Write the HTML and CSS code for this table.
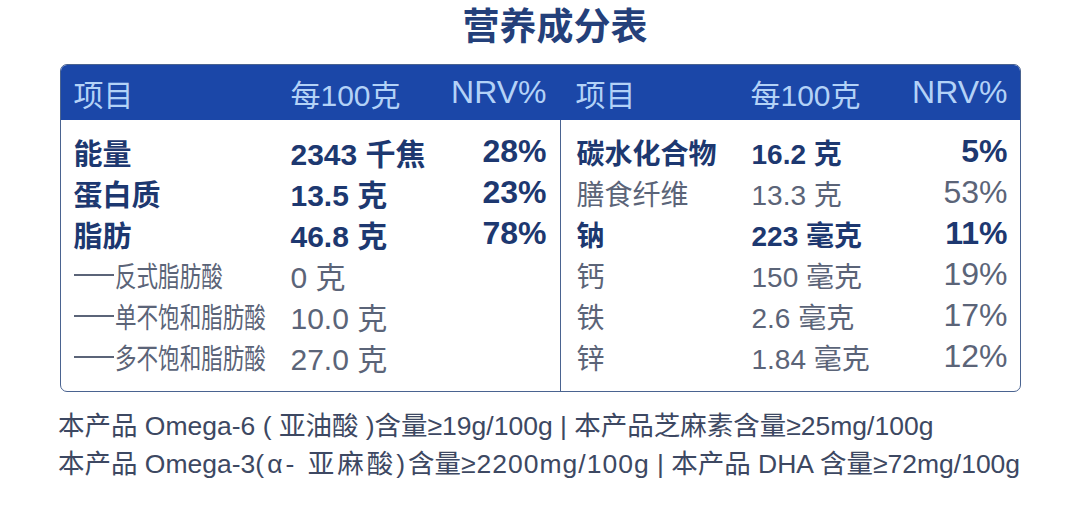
FILE: index.html
```html
<!DOCTYPE html>
<html lang="zh-CN">
<head>
  <meta charset="UTF-8" />
  <title>营养成分表</title>
  <link rel="stylesheet" href="styles.css">
</head>
<body>
  <h1 class="title">营养成分表</h1>

  <div class="nutri-box">
    <div class="head">
      <div class="half left">
        <span>项目</span><span>每100克</span><span class="nrv">NRV%</span>
      </div>
      <div class="half right">
        <span>项目</span><span>每100克</span><span class="nrv">NRV%</span>
      </div>
    </div>

    <div class="body">
      <div class="half left">
        <div class="row strong"><span>能量</span><span class="val">2343 千焦</span><span class="nrv">28%</span></div>
        <div class="row strong"><span>蛋白质</span><span class="val">13.5 克</span><span class="nrv">23%</span></div>
        <div class="row strong"><span>脂肪</span><span class="val">46.8 克</span><span class="nrv">78%</span></div>
        <div class="row sub"><span class="name"><i class="dash"></i><em>反式脂肪酸</em></span><span class="val">0 克</span><span class="nrv"></span></div>
        <div class="row sub"><span class="name"><i class="dash"></i><em>单不饱和脂肪酸</em></span><span class="val">10.0 克</span><span class="nrv"></span></div>
        <div class="row sub"><span class="name"><i class="dash"></i><em>多不饱和脂肪酸</em></span><span class="val">27.0 克</span><span class="nrv"></span></div>
      </div>
      <div class="half right">
        <div class="row strong"><span>碳水化合物</span><span class="val">16.2 克</span><span class="nrv">5%</span></div>
        <div class="row"><span>膳食纤维</span><span class="val">13.3 克</span><span class="nrv">53%</span></div>
        <div class="row strong"><span>钠</span><span class="val">223 毫克</span><span class="nrv">11%</span></div>
        <div class="row"><span>钙</span><span class="val">150 毫克</span><span class="nrv">19%</span></div>
        <div class="row"><span>铁</span><span class="val">2.6 毫克</span><span class="nrv">17%</span></div>
        <div class="row"><span>锌</span><span class="val">1.84 毫克</span><span class="nrv">12%</span></div>
      </div>
    </div>
  </div>

  <div class="notes">
    <p>本产品 Omega-6 ( 亚油酸 )含量≥19g/100g | 本产品芝麻素含量≥25mg/100g</p>
    <p>本产品 Omega-3<span class="wide">(α- 亚麻酸)</span>含量<span class="loose">≥2200mg/100g</span> | 本产品 DHA 含量≥72mg/100g</p>
  </div>
</body>
</html>
```

FILE: styles.css
```css
body {
  margin: 0;
  font-family: "Liberation Sans", "Noto Sans CJK SC", sans-serif;
  background: #ffffff;
  color: #1d3870;
}
.title {
  margin: 6px 0 0;
  padding-left: 30px;
  text-align: center;
  font-size: 37px;
  line-height: 44px;
  font-weight: 700;
  color: #24407a;
}
.nutri-box {
  width: 959px;
  margin: 14px auto 0;
  border: 1.5px solid #4a6390;
  border-radius: 7px;
  overflow: hidden;
  background: #fff;
}
.head {
  display: flex;
  height: 55px;
  background: #1b47a8;
  color: #b3d2f7;
  font-size: 30px;
}
.head .nrv {
  font-size: 32px;
}
.half {
  display: grid;
  box-sizing: border-box;
}
.half.left {
  width: 499px;
  padding: 0 13px 0 13px;
  grid-template-columns: 217px 1fr auto;
}
.half.right {
  flex: 1;
  padding: 0 12px 0 16px;
  grid-template-columns: 175px 1fr auto;
}
.head .half {
  align-items: center;
}
.nrv {
  text-align: right;
}
.body {
  display: flex;
}
.body .half {
  padding-top: 11px;
  padding-bottom: 14px;
  grid-template-rows: repeat(6, 41px);
  align-content: start;
}
.body .half.right {
  border-left: 1.5px solid #4a6390;
}
.row {
  display: contents;
  font-size: 29px;
  color: #5b6478;
}
.row > span {
  display: flex;
  align-items: center;
  justify-content: flex-start;
  white-space: nowrap;
  min-width: 0;
}
.row > span.nrv {
  justify-content: flex-end;
  font-size: 32px;
}
.left .row > span.val {
  font-size: 30px;
}
.row.strong {
  color: #1d3870;
  font-weight: 700;
}
.right .row {
  font-size: 28px;
}
.row.sub .name em {
  flex: none;
  display: inline-block;
  font-style: normal;
  font-size: 28px;
  transform: scaleX(0.77);
  transform-origin: left center;
}
.dash {
  flex: none;
  display: inline-block;
  width: 40px;
  height: 0;
  margin-right: 1px;
  border-top: 2px solid #5b6478;
}
.notes {
  margin: 15px 0 0 58px;
  color: #3d4862;
  font-size: 26.5px;
  line-height: 38px;
}
.notes p {
  margin: 0;
  white-space: nowrap;
}
.notes .wide {
  letter-spacing: 3px;
}
.notes .loose {
  letter-spacing: 1px;
}
```
